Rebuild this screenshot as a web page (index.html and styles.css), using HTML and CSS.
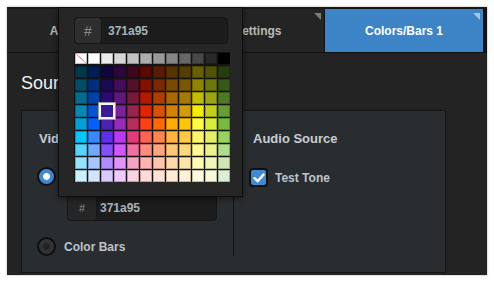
FILE: index.html
```html
<!DOCTYPE html>
<html lang="en">
<head>
    <meta charset="UTF-8">
    <meta name="viewport" content="width=device-width, initial-scale=1.0">
    <title>Colors/Bars 1</title>
    <link rel="stylesheet" href="styles.css">
</head>

<body>
    <div class="window">
        <div class="tabs">
            <div class="tab">Adjustments</div>
            <div class="tab settings">Input Settings</div>
            <div class="tab active">Colors/Bars 1</div>
        </div>

        <div class="content">
            <h2 class="title">Source</h2>
            <div class="group">
                <div class="column video">
                    <h3>Video Source</h3>
                    <div class="option first">
                        <span class="radio checked"></span>
                        <span class="option-label">Solid Color</span>
                    </div>
                    <div class="hex-input small">
                        <span class="hash">#</span>
                        <span class="hex-value">371a95</span>
                    </div>
                    <div class="option">
                        <span class="radio"></span>
                        <span class="option-label">Color Bars</span>
                    </div>
                </div>
                <div class="divider"></div>
                <div class="column audio">
                    <h3>Audio Source</h3>
                    <div class="option first">
                        <span class="checkbox">
                            <svg width="12" height="10" viewBox="0 0 12 10">
                                <path d="M1.5 5.2 L4.6 8.2 L10.5 1.6" fill="none" stroke="#fff" stroke-width="2.4" stroke-linecap="round" stroke-linejoin="round"/>
                            </svg>
                        </span>
                        <span class="option-label">Test Tone</span>
                    </div>
                </div>
            </div>
        </div>

        <div class="picker">
            <div class="hex-input">
                <span class="hash">#</span>
                <span class="hex-value">371a95</span>
            </div>
            <div class="palette" id="palette"></div>
        </div>
    </div>

    <script>
        var colors = [
            "none", "#ffffff", "#ebebeb", "#d6d6d6", "#c2c2c2", "#adadad", "#999999", "#858585", "#666666", "#474747", "#292929", "#000000",
            "#00374a", "#011d57", "#11053b", "#2e063d", "#3c071b", "#5c0701", "#5a1c00", "#583300", "#563d00", "#666100", "#4f5504", "#263e0f",
            "#004d65", "#012f7b", "#1a0a52", "#450d59", "#551029", "#831100", "#7b2900", "#7a4a00", "#785800", "#8c8602", "#6f760a", "#38571a",
            "#016e8f", "#0042a9", "#2c0977", "#61187c", "#791a3d", "#b51a00", "#ad3e00", "#a96800", "#a67b01", "#c4bc00", "#9ba50e", "#4e7a27",
            "#008cb4", "#0056d6", "#371a94", "#7a219e", "#99244f", "#e22400", "#da5100", "#d38301", "#d19d01", "#f5ec00", "#c3d117", "#669d34",
            "#00a1d8", "#0061fd", "#4d22b2", "#982abc", "#b92d5d", "#ff4015", "#ff6a00", "#ffab01", "#fcc700", "#fefb41", "#d9ec37", "#76bb40",
            "#01c7fc", "#3a87fd", "#5e30eb", "#be38f3", "#e63b7a", "#fe6250", "#fe8648", "#feb43f", "#fecb3e", "#fff76b", "#e4ef65", "#96d35f",
            "#52d6fc", "#74a7ff", "#864ffd", "#d357fe", "#ee719e", "#ff8c82", "#fea57d", "#fec777", "#fed977", "#fff994", "#eaf28f", "#b1dd8b",
            "#93e3fc", "#a7c6ff", "#b18cfe", "#e292fe", "#f4a4c0", "#ffb5af", "#ffc5ab", "#fed9a8", "#fde4a8", "#fffbb9", "#f1f7b7", "#cde8b5",
            "#cbf0ff", "#d3e2ff", "#d9c9fe", "#efcafe", "#f9d3e0", "#ffdad8", "#ffe2d6", "#feecd4", "#fef1d5", "#fdfbdd", "#f6fadb", "#deeed4"
        ];
        var selected = "#371a94";
        var palette = document.getElementById("palette");

        for (var i = 0; i < colors.length; i++) {
            var cell = document.createElement("div");
            cell.className = "swatch";
            if (colors[i] === "none") {
                cell.classList.add("none");
            } else {
                cell.style.backgroundColor = colors[i];
            }
            if (i < 12) {
                cell.classList.add("grey");
            }
            if (colors[i] === selected) {
                cell.classList.add("selected");
            }
            palette.appendChild(cell);
        }
    </script>
</body>

</html>
```

FILE: styles.css
```css
body {
    margin: 0;
    padding: 7px;
    background-color: #fff;
    font-family: "Liberation Sans", Arial, sans-serif;
}

.window {
    position: relative;
    width: 480px;
    height: 268px;
    background-color: #232323;
    box-shadow: 0 0 2px rgba(0, 0, 0, 0.35);
    overflow: hidden;
}

/* tab bar */

.tabs {
    display: flex;
    gap: 1px;
    height: 43px;
    background-color: #121212;
    border-top: 2px solid #171717;
    border-bottom: 1px solid #111;
}

.tab {
    position: relative;
    width: 158px;
    display: flex;
    justify-content: center;
    align-items: center;
    background-color: #242424;
    color: #b9b9b9;
    font-size: 12px;
    font-weight: bold;
}

.tab.settings {
    box-sizing: border-box;
    padding-right: 7px;
}

.tab::after {
    content: "";
    position: absolute;
    top: 4px;
    right: 3px;
    border-top: 7px solid #7c7c7c;
    border-left: 7px solid transparent;
}

.tab.active {
    background-color: #3d84c6;
    color: #fff;
}

.tab.active::after {
    border-top-color: #a8c3dc;
}

/* content */

.content {
    padding: 19px 0 0 14px;
}

.title {
    margin: 0;
    font-size: 18px;
    line-height: 22px;
    font-weight: normal;
    color: #f2f2f2;
}

.group {
    display: flex;
    width: 423px;
    height: 161px;
    margin-top: 16px;
    background-color: #2a2d30;
    border: 1px solid #151515;
}

.column {
    padding-top: 20px;
}

.column.video {
    width: 194px;
    padding-left: 17px;
}

.column.audio {
    flex: 1;
    padding-left: 19px;
}

.divider {
    width: 1px;
    margin: 9px 0 16px;
    background-color: #121212;
}

h3 {
    margin: 0;
    font-size: 13px;
    line-height: 16px;
    color: #c6cdd4;
}

.option {
    display: flex;
    align-items: center;
    gap: 8px;
    margin-top: 16px;
    margin-left: -2px;
    height: 19px;
}

.option.first {
    margin-top: 20px;
}

.audio .option.first {
    margin-top: 21px;
    margin-left: -4px;
    gap: 7px;
}

.option-label {
    font-size: 12px;
    font-weight: bold;
    color: #bcc4cc;
}

.radio {
    width: 15px;
    height: 15px;
    border: 2px solid #0f0f0f;
    border-radius: 50%;
    background: radial-gradient(circle, #242424 0 3px, #333 4px);
}

.radio.checked {
    background: radial-gradient(circle, #fff 0 3px, #3f8ad3 3.8px);
}

.checkbox {
    width: 15px;
    height: 15px;
    display: flex;
    justify-content: center;
    align-items: center;
    border: 2px solid #0f0f0f;
    border-radius: 4px;
    background-color: #3f8ad3;
}

/* hex field */

.hex-input {
    display: flex;
    align-items: center;
    height: 25px;
    background-color: #1c1c1c;
    border: 1px solid #151515;
    border-radius: 4px;
}

.hex-input.small {
    width: 148px;
    margin: 8px 0 0 28px;
}

.hash {
    width: 26px;
    height: 25px;
    margin-left: -1px;
    display: flex;
    justify-content: center;
    align-items: center;
    background-color: #2e2e2e;
    border: 1px solid #171717;
    border-radius: 4px;
    color: #8a8a8a;
    font-size: 14px;
}

.small .hash {
    width: 28px;
    background-color: #262626;
    font-size: 11px;
}

.hex-value {
    margin-left: 6px;
    font-size: 12px;
    font-weight: bold;
    color: #a9b2bb;
}

.small .hex-value {
    margin-left: 3px;
}

/* color picker popover */

.picker {
    position: absolute;
    top: 0;
    left: 51px;
    width: 156px;
    padding: 9px 12px 14px 15px;
    background-color: #262626;
    border: 1px solid #0d0d0d;
    box-shadow: 0 2px 6px rgba(0, 0, 0, 0.45);
}

.picker .hex-input {
    width: 152px;
}

.palette {
    display: grid;
    grid-template-columns: repeat(12, 12px);
    grid-auto-rows: 12px;
    gap: 1px;
    width: 155px;
    margin-top: 8px;
    padding: 1px 0 0 1px;
    background-color: #141414;
}

.swatch {
    box-shadow: inset 0 0 0 1px rgba(0, 0, 0, 0.25);
}

.swatch.grey {
    margin-bottom: 1px;
}

.swatch.none {
    background: linear-gradient(to top right, #fff 46%, #f2a0a0 48%, #f2a0a0 52%, #fff 54%);
}

.swatch.selected {
    position: relative;
    z-index: 1;
    box-shadow: 0 0 0 2px #f4f4f4, 0 0 0 3px #9a9a9a;
}
```
